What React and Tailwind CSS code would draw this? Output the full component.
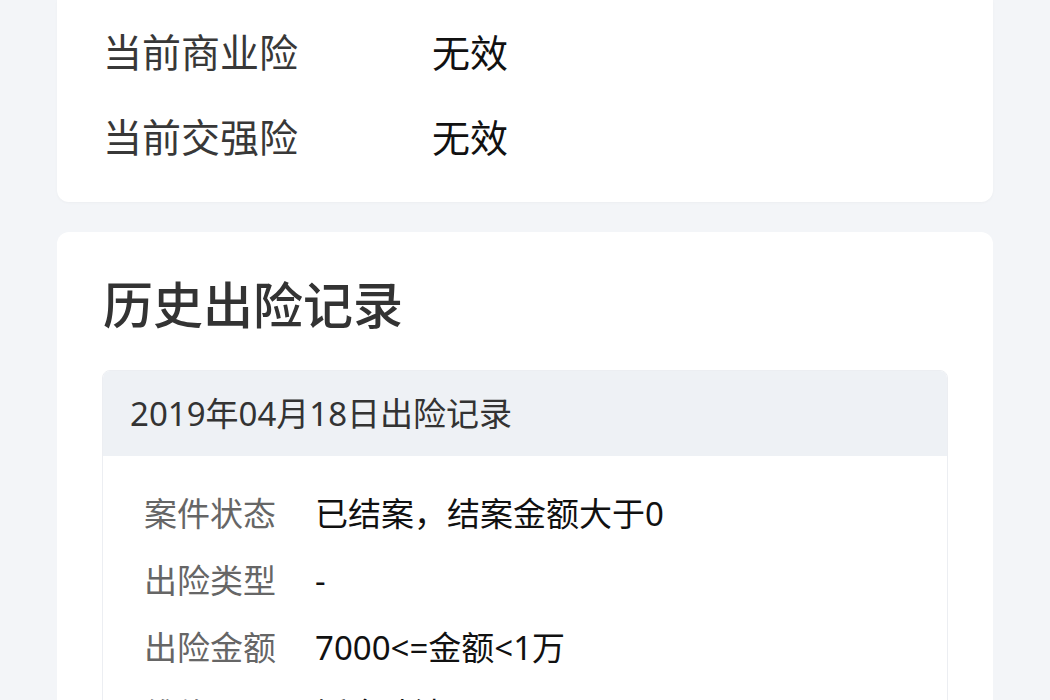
const font = { fontFamily: '"Noto Sans", "Noto Sans CJK SC", sans-serif' };

const policies = [
  { label: "当前商业险", value: "无效" },
  { label: "当前交强险", value: "无效" },
];

const records = [
  { label: "案件状态", value: "已结案，结案金额大于0" },
  { label: "出险类型", value: "-" },
  { label: "出险金额", value: "7000<=金额<1万" },
  { label: "维修项目", value: "钣金喷漆" },
];

export default function App() {
  return (
    <div className="h-[700px] w-[1050px] overflow-hidden bg-[#f3f5f8]" style={font}>
      {/* Current policy card */}
      <div className="mx-[57px] rounded-b-xl bg-white px-[46px] pt-[10px] pb-[22px] shadow-[0_1px_3px_rgba(0,0,0,0.03)]">
        {policies.map((p) => (
          <div key={p.label} className="flex h-[85px] items-center text-[39px]">
            <span className="w-[329px] text-[#383838]">{p.label}</span>
            <span className="text-[38px] text-[#111]">{p.value}</span>
          </div>
        ))}
      </div>

      {/* History card */}
      <div className="mx-[57px] mt-[30px] rounded-xl bg-white pt-[43px]">
        <h1 className="px-[46px] text-[50px] font-medium leading-[60px] text-[#333]">历史出险记录</h1>
        <div className="mx-[45px] mt-[35px] overflow-hidden rounded-t-lg border border-[#eceef2]">
          <div className="flex h-[85px] items-center bg-[#eef1f5] pl-[27px] text-[33px] text-[#333]">
            2019年04月18日出险记录
          </div>
          <div className="bg-white pt-[24px] pl-[41px]">
            {records.map((r) => (
              <div key={r.label} className="flex h-[67px] items-center">
                <span className="w-[171px] text-[33px] text-[#666]">{r.label}</span>
                <span className="text-[33px] text-[#111]">{r.value}</span>
              </div>
            ))}
          </div>
        </div>
      </div>
    </div>
  );
}
